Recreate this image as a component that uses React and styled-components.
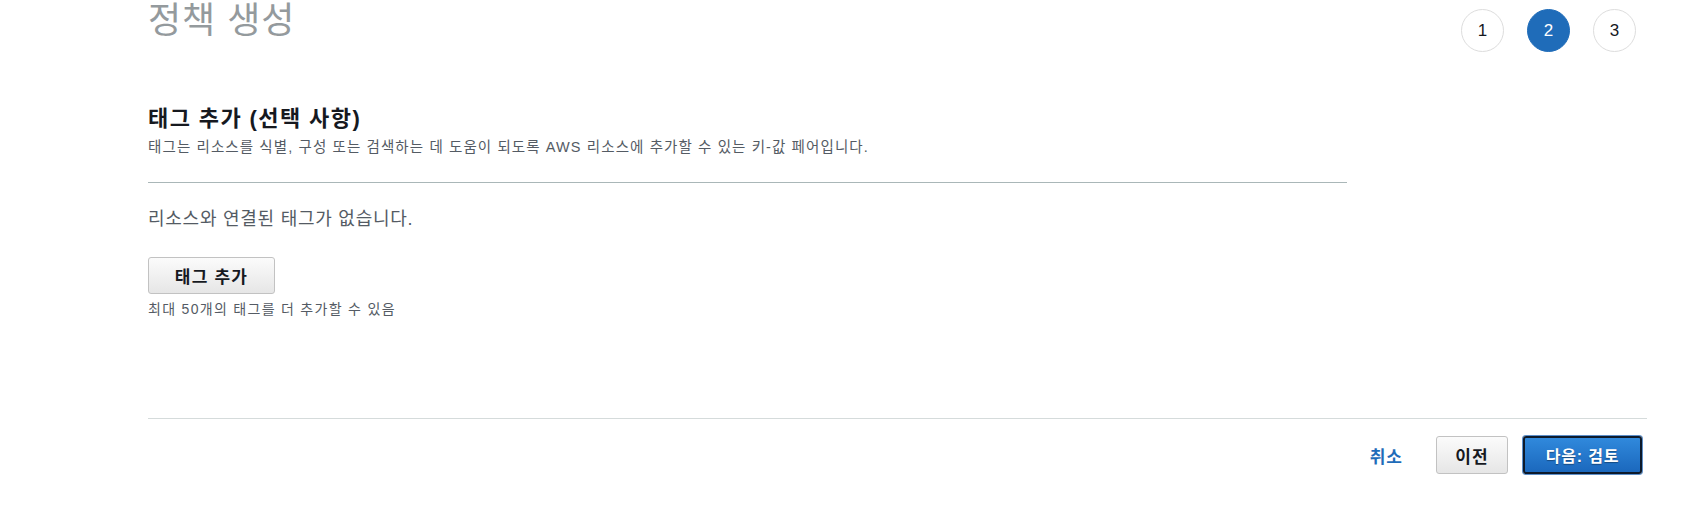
import React from "react";
import styled, { createGlobalStyle } from "styled-components";

const Global = createGlobalStyle`
  html, body { margin: 0; padding: 0; background: #fff; }
  body {
    font-family: "Liberation Sans", "Noto Sans CJK KR", Arial, sans-serif;
    color: #16191f;
  }
`;

const Page = styled.div`
  width: 1691px;
  height: 505px;
  overflow: hidden;
  box-sizing: border-box;
  padding: 0 44px 0 148px;
  display: flex;
  flex-direction: column;
`;

const Header = styled.div`
  display: flex;
  justify-content: space-between;
  align-items: flex-start;
  height: 78px;
`;

const Title = styled.h1`
  margin: 1px 0 0 0;
  font-size: 36px;
  line-height: 40px;
  font-weight: 400;
  color: #949a9d;
  letter-spacing: 1px;
`;

const Steps = styled.div`
  display: flex;
  gap: 23px;
  padding: 9px 11px 0 0;
`;

const Step = styled.div`
  width: 43px;
  height: 43px;
  box-sizing: border-box;
  border-radius: 50%;
  display: flex;
  align-items: center;
  justify-content: center;
  font-family: "Liberation Sans", Arial, sans-serif;
  font-size: 17px;
  color: ${(p) => (p.$active ? "#fff" : "#16191f")};
  background: ${(p) => (p.$active ? "#1f6cb9" : "#fff")};
  border: 1px solid ${(p) => (p.$active ? "#1f6cb9" : "#dddddd")};
`;

const Section = styled.section`
  width: 1199px;
`;

const SectionHeader = styled.div`
  padding-top: 27px;
  padding-bottom: 26px;
  border-bottom: 1px solid #aab7b8;
`;

const Heading = styled.h2`
  margin: 0;
  font-size: 22px;
  line-height: 28px;
  font-weight: 700;
  color: #16191f;
  letter-spacing: 1.4px;
`;

const Description = styled.p`
  margin: 5px 0 0 0;
  font-size: 14.5px;
  line-height: 18px;
  color: #545b64;
  letter-spacing: 1.1px;
`;

const Body = styled.div`
  padding-top: 24px;
  height: 235px;
  box-sizing: border-box;
`;

const EmptyText = styled.p`
  margin: 0;
  font-size: 18px;
  line-height: 24px;
  color: #545b64;
  letter-spacing: 0.75px;
`;

const SecondaryButton = styled.button`
  box-sizing: border-box;
  height: 37px;
  padding: 0;
  border: 1px solid #c2c2c2;
  border-radius: 3px;
  background: linear-gradient(#fbfbfb, #e6e6e6);
  font-family: "Liberation Sans", "Noto Sans CJK KR", Arial, sans-serif;
  font-size: 17px;
  font-weight: 700;
  color: #16191f;
  cursor: pointer;
  letter-spacing: 1.2px;
`;

const AddButton = styled(SecondaryButton)`
  display: block;
  margin-top: 26px;
  width: 127px;
`;

const Hint = styled.p`
  margin: 6px 0 0 0;
  font-size: 14px;
  line-height: 18px;
  color: #545b64;
  letter-spacing: 1.3px;
`;

const Footer = styled.div`
  border-top: 1px solid #d5dbdb;
  display: flex;
  justify-content: flex-end;
  align-items: center;
  padding-top: 17px;
  padding-right: 5px;
`;

const LinkButton = styled.button`
  border: none;
  background: none;
  padding: 0;
  margin-right: 33px;
  font-family: "Liberation Sans", "Noto Sans CJK KR", Arial, sans-serif;
  font-size: 17px;
  font-weight: 700;
  letter-spacing: 1px;
  color: #1f6cb9;
  cursor: pointer;
`;

const PrevButton = styled(SecondaryButton)`
  width: 72px;
  height: 38px;
  margin-right: 15px;
`;

const PrimaryButton = styled.button`
  box-sizing: border-box;
  width: 119px;
  height: 38px;
  border: 2px solid #0d1a2b;
  border-radius: 3px;
  box-shadow: 0 0 0 1px #5d8fc9;
  background: linear-gradient(#3089dc, #1b68bd);
  font-family: "Liberation Sans", "Noto Sans CJK KR", Arial, sans-serif;
  font-size: 16px;
  font-weight: 700;
  color: #fff;
  letter-spacing: 0.8px;
  text-shadow: 0 1px 1px rgba(0, 0, 0, 0.35);
  cursor: pointer;
`;

export default function App() {
  return (
    <>
      <Global />
      <Page>
        <Header>
          <Title>정책 생성</Title>
          <Steps>
            <Step>1</Step>
            <Step $active>2</Step>
            <Step>3</Step>
          </Steps>
        </Header>
        <Section>
          <SectionHeader>
            <Heading>태그 추가 (선택 사항)</Heading>
            <Description>
              태그는 리소스를 식별, 구성 또는 검색하는 데 도움이 되도록 AWS 리소스에 추가할 수 있는 키-값 페어입니다.
            </Description>
          </SectionHeader>
          <Body>
            <EmptyText>리소스와 연결된 태그가 없습니다.</EmptyText>
            <AddButton>태그 추가</AddButton>
            <Hint>최대 50개의 태그를 더 추가할 수 있음</Hint>
          </Body>
        </Section>
        <Footer>
          <LinkButton>취소</LinkButton>
          <PrevButton>이전</PrevButton>
          <PrimaryButton>다음: 검토</PrimaryButton>
        </Footer>
      </Page>
    </>
  );
}
